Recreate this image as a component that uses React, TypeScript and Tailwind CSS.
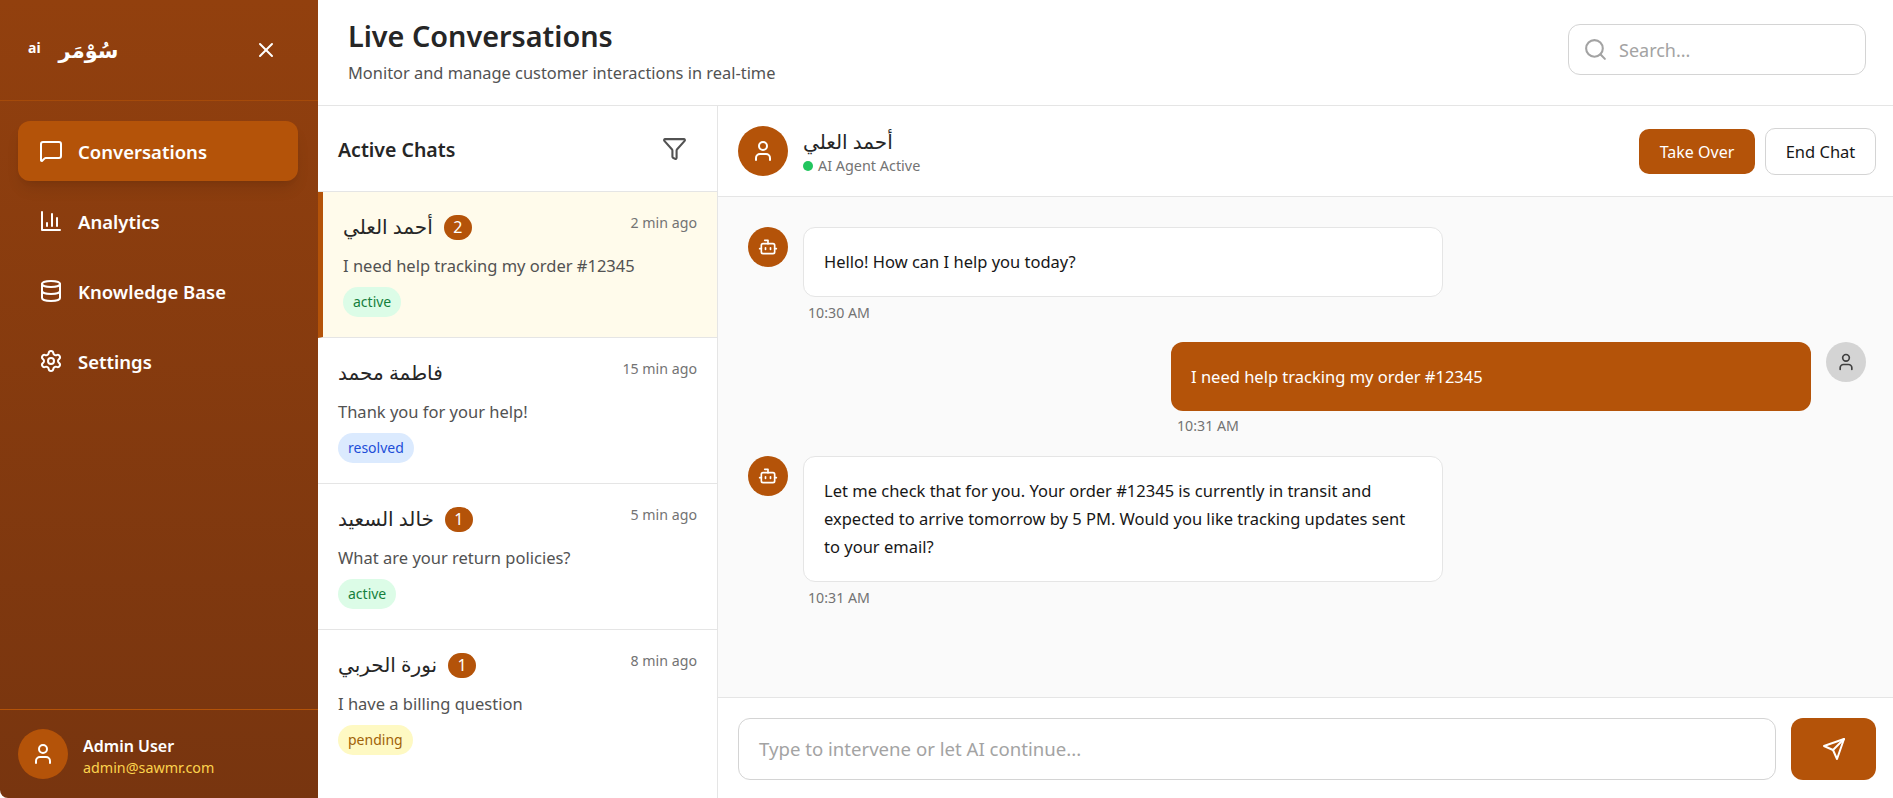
import { Bot, Database, Filter, MessageSquare, Search, Settings, User, X } from "lucide-react";

function BarsIcon({ size = 24 }: { size?: number }) {
  return (
    <svg width={size} height={size} viewBox="0 0 24 24" fill="none" stroke="currentColor" strokeWidth="2" strokeLinecap="round" strokeLinejoin="round">
      <path d="M3 3v18h18" />
      <path d="M18 17V9" />
      <path d="M13 17V5" />
      <path d="M8 17v-3" />
    </svg>
  );
}

function SendIcon({ size = 24 }: { size?: number }) {
  return (
    <svg width={size} height={size} viewBox="0 0 24 24" fill="none" stroke="currentColor" strokeWidth="2" strokeLinecap="round" strokeLinejoin="round">
      <path d="m22 2-7 20-4-9-9-4Z" />
      <path d="M22 2 11 13" />
    </svg>
  );
}

const navItems = [
  { label: "Conversations", icon: MessageSquare, active: true },
  { label: "Analytics", icon: BarsIcon },
  { label: "Knowledge Base", icon: Database },
  { label: "Settings", icon: Settings },
];

const chats = [
  { name: "أحمد العلي", time: "2 min ago", text: "I need help tracking my order #12345", status: "active", unread: 2, selected: true },
  { name: "فاطمة محمد", time: "15 min ago", text: "Thank you for your help!", status: "resolved", unread: 0 },
  { name: "خالد السعيد", time: "5 min ago", text: "What are your return policies?", status: "active", unread: 1 },
  { name: "نورة الحربي", time: "8 min ago", text: "I have a billing question", status: "pending", unread: 1, last: true },
];

const statusStyles: Record<string, string> = {
  active: "bg-[#dcfce7] text-[#15803d]",
  resolved: "bg-[#dbeafe] text-[#1d4ed8]",
  pending: "bg-[#fef9c3] text-[#a16207]",
};

function Sidebar() {
  return (
    <aside className="w-[318px] shrink-0 flex flex-col bg-gradient-to-b from-[#92400e] to-[#78350f] text-white rounded-bl-lg">
      <div className="h-[101px] shrink-0 border-b border-[#b4530999] flex items-center justify-between pl-[28px] pr-[40px]">
        <div className="flex items-center gap-[18px]" dir="ltr">
          <span className="text-[14px] font-bold leading-none -mt-[4px]">ai</span>
          <span className="text-[21px] font-bold leading-none" dir="rtl">سُوْمَر</span>
        </div>
        <X size={24} strokeWidth={2} />
      </div>
      <nav className="flex-1 pl-[18px] pr-[20px] pt-[20px] flex flex-col gap-[10px]">
        {navItems.map((item) => (
          <div
            key={item.label}
            className={`h-[60px] rounded-[12px] flex items-center gap-[15px] pl-[21px] text-[18.5px] font-semibold ${
              item.active ? "bg-[#b45309] shadow-lg" : ""
            }`}
          >
            <item.icon size={24} />
            <span className="mt-[2px]">{item.label}</span>
          </div>
        ))}
      </nav>
      <div className="h-[89px] shrink-0 border-t border-[#b45309] flex items-center gap-[15px] px-[18px]">
        <div className="w-[50px] h-[50px] rounded-full bg-[#b45309] flex items-center justify-center">
          <User size={24} />
        </div>
        <div className="mt-[3px]">
          <div className="text-[16px] font-semibold leading-[24px]">Admin User</div>
          <div className="text-[14.3px] leading-[20px] text-[#fcd34d]">admin@sawmr.com</div>
        </div>
      </div>
    </aside>
  );
}

function Header() {
  return (
    <header className="h-[106px] shrink-0 border-b border-[#e5e5e5] flex items-start justify-between pl-[30px] pr-[27px] bg-white">
      <div className="pt-[18px]">
        <h1 className="text-[28.8px] font-semibold leading-[36px] text-[#262626]">Live Conversations</h1>
        <p className="text-[16.4px] leading-[24px] mt-[7px] text-[#525252]">Monitor and manage customer interactions in real-time</p>
      </div>
      <div className="mt-[24px] w-[298px] h-[51px] border border-[#d4d4d4] rounded-[12px] flex items-center gap-[11px] pl-[14px]">
        <Search size={25} className="text-[#a3a3a3]" />
        <span className="text-[18px] mt-[2px] text-[#a3a3a3]">Search...</span>
      </div>
    </header>
  );
}

function ChatList() {
  return (
    <div className="w-[400px] shrink-0 border-r border-[#e5e5e5] flex flex-col bg-white">
      <div className="h-[86px] shrink-0 border-b border-[#e5e5e5] flex items-center justify-between pl-[20px] pr-[30px]">
        <h2 className="text-[19.5px] font-semibold mt-[2px] text-[#262626]">Active Chats</h2>
        <Filter size={25} className="text-[#525252]" />
      </div>
      {chats.map((chat) => (
        <div
          key={chat.name}
          className={`h-[146px] shrink-0 pr-[20px] pt-[20px] pl-[20px] ${chat.last ? "" : "border-b border-[#e5e5e5]"} ${
            chat.selected ? "bg-[#fffbeb] border-l-[5px] border-l-[#b45309]" : ""
          }`}
        >
          <div className="flex items-start justify-between">
            <div className="flex items-center gap-[11px] h-[28px] mt-[1px]">
              <span className="text-[20px] font-medium text-[#262626]">{chat.name}</span>
              {chat.unread > 0 && (
                <span className="w-[28px] h-[25px] rounded-full bg-[#b45309] text-white text-[16px] flex items-center justify-center">
                  {chat.unread}
                </span>
              )}
            </div>
            <span className="text-[14.2px] leading-[20px] mt-[1px] text-[#737373]">{chat.time}</span>
          </div>
          <p className="text-[16.5px] leading-[24px] mt-[13px] text-[#525252]">{chat.text}</p>
          <span className={`inline-block mt-[9px] px-[10px] h-[30px] leading-[30px] rounded-full text-[14px] ${statusStyles[chat.status]}`}>
            {chat.status}
          </span>
        </div>
      ))}
    </div>
  );
}

function BotBubble({ lines, time }: { lines: string[]; time: string }) {
  return (
    <div className="flex gap-[15px] mb-[19px]">
      <div className="w-[40px] h-[40px] shrink-0 rounded-full bg-[#b45309] flex items-center justify-center text-white">
        <Bot size={20} />
      </div>
      <div>
        <div className="w-[640px] bg-white border border-[#e5e5e5] rounded-[12px] px-[20px] py-[20px] text-[16.5px] leading-[28px] text-[#171717]">
          {lines.map((l) => (
            <div key={l} className="whitespace-nowrap">{l}</div>
          ))}
        </div>
        <div className="text-[14.2px] leading-[20px] mt-[6px] pl-[5px] text-[#737373]">{time}</div>
      </div>
    </div>
  );
}

function ChatPanel() {
  return (
    <div className="flex-1 flex flex-col min-w-0">
      <div className="h-[91px] shrink-0 border-b border-[#e5e5e5] flex items-center justify-between pl-[20px] pr-[17px] bg-white">
        <div className="flex items-center gap-[15px]">
          <div className="w-[50px] h-[50px] rounded-full bg-[#b45309] flex items-center justify-center text-white">
            <User size={24} />
          </div>
          <div className="mt-[2px]">
            <div className="text-[20px] font-medium leading-[28px] text-[#262626]">أحمد العلي</div>
            <div className="flex items-center gap-[5px] text-[14.4px] leading-[20px] text-[#737373]">
              <span className="w-[10px] h-[10px] rounded-full bg-[#22c55e]" />
              AI Agent Active
            </div>
          </div>
        </div>
        <div className="flex items-center gap-[10px]">
          <button className="w-[116px] h-[45px] rounded-[10px] bg-[#b45309] text-white text-[16px] pt-[2px]">Take Over</button>
          <button className="w-[111px] h-[47px] rounded-[10px] border border-[#d4d4d4] bg-white text-[16.5px] pt-[2px] text-[#171717]">End Chat</button>
        </div>
      </div>
      <div className="flex-1 bg-[#fafafa] pt-[30px] pl-[30px] pr-[27px] overflow-hidden">
        <BotBubble lines={["Hello! How can I help you today?"]} time="10:30 AM" />
        <div className="flex justify-end gap-[15px] mb-[20px]">
          <div>
            <div className="w-[640px] bg-[#b45309] rounded-[12px] p-[20px] text-[16.5px] leading-[29px] text-white">
              I need help tracking my order #12345
            </div>
            <div className="text-[14.2px] leading-[20px] mt-[5px] pl-[6px] text-[#737373]">10:31 AM</div>
          </div>
          <div className="w-[40px] h-[40px] shrink-0 rounded-full bg-[#d4d4d4] flex items-center justify-center text-[#404040]">
            <User size={20} />
          </div>
        </div>
        <BotBubble
          lines={[
            "Let me check that for you. Your order #12345 is currently in transit and",
            "expected to arrive tomorrow by 5 PM. Would you like tracking updates sent",
            "to your email?",
          ]}
          time="10:31 AM"
        />
      </div>
      <div className="h-[101px] shrink-0 border-t border-[#e5e5e5] flex items-start gap-[15px] pt-[20px] pl-[20px] pr-[17px] bg-white">
        <div className="flex-1 h-[62px] border border-[#d4d4d4] rounded-[12px] flex items-center pl-[20px] text-[18.6px] text-[#a3a3a3]">
          Type to intervene or let AI continue...
        </div>
        <button className="w-[85px] h-[62px] rounded-[12px] bg-[#b45309] flex items-center justify-center text-white">
          <SendIcon size={24} />
        </button>
      </div>
    </div>
  );
}

export default function App() {
  return (
    <div className="h-[798px] flex overflow-hidden bg-white font-['Noto_Sans','DejaVu_Sans',sans-serif]">
      <Sidebar />
      <main className="flex-1 flex flex-col min-w-0">
        <Header />
        <div className="flex flex-1 min-h-0">
          <ChatList />
          <ChatPanel />
        </div>
      </main>
    </div>
  );
}
